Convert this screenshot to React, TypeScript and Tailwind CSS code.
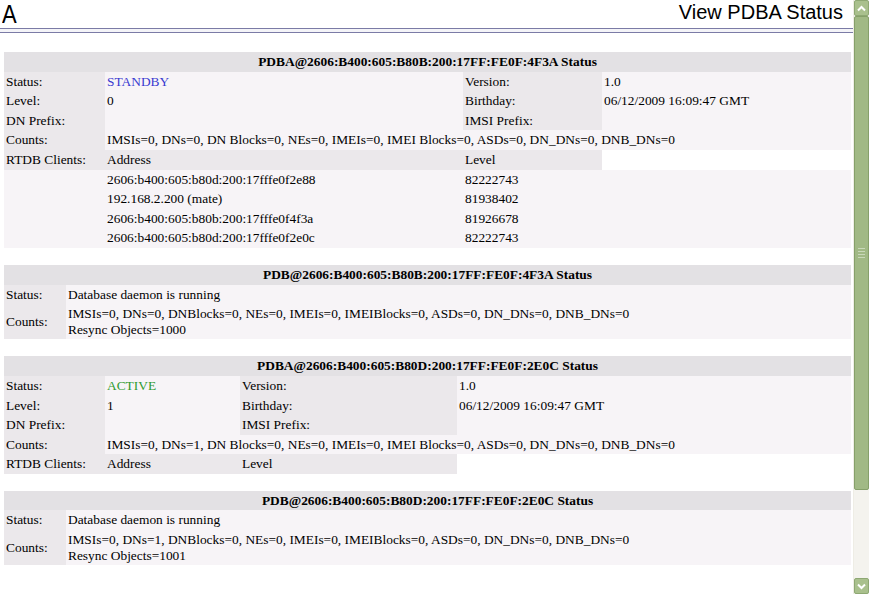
import React from "react";

const serif = { fontFamily: '"Liberation Serif", "Times New Roman", serif' };

const HDR = "bg-[#e3e1e4]";
const LBL = "bg-[#ebe8eb]";
const VAL = "bg-[#f7f4f7]";
const td = "px-[2px] py-[2px] leading-[15.6px] text-left align-middle whitespace-nowrap";

function Header({ title, cols }: { title: string; cols: number }) {
  return (
    <tr>
      <th colSpan={cols} className={`${HDR} ${td} text-center font-bold`} style={{ textAlign: "center" }}>
        {title}
      </th>
    </tr>
  );
}

function PdbaTable({
  title,
  status,
  statusColor,
  level,
  counts,
  widths,
  clients,
}: {
  title: string;
  status: string;
  statusColor: string;
  level: string;
  counts: string;
  widths: number[];
  clients: [string, string][];
}) {
  return (
    <table className="table-fixed w-[847px] border-collapse text-[13.4px] text-black" style={serif}>
      <colgroup>
        {widths.map((w, i) => (
          <col key={i} style={{ width: w }} />
        ))}
      </colgroup>
      <tbody>
        <Header title={title} cols={4} />
        <tr>
          <td className={`${LBL} ${td}`}>Status:</td>
          <td className={`${VAL} ${td} ${statusColor}`}>{status}</td>
          <td className={`${LBL} ${td}`}>Version:</td>
          <td className={`${VAL} ${td}`}>1.0</td>
        </tr>
        <tr>
          <td className={`${LBL} ${td}`}>Level:</td>
          <td className={`${VAL} ${td}`}>{level}</td>
          <td className={`${LBL} ${td}`}>Birthday:</td>
          <td className={`${VAL} ${td}`}>06/12/2009 16:09:47 GMT</td>
        </tr>
        <tr>
          <td className={`${LBL} ${td}`}>DN Prefix:</td>
          <td className={`${VAL} ${td}`}></td>
          <td className={`${LBL} ${td}`}>IMSI Prefix:</td>
          <td className={`${VAL} ${td}`}></td>
        </tr>
        <tr>
          <td className={`${LBL} ${td}`}>Counts:</td>
          <td colSpan={3} className={`${VAL} ${td}`}>
            {counts}
          </td>
        </tr>
        <tr>
          <td className={`${LBL} ${td}`}>RTDB Clients:</td>
          <td className={`${LBL} ${td}`}>Address</td>
          <td className={`${LBL} ${td}`}>Level</td>
          <td className={`${td}`}></td>
        </tr>
        {clients.map(([a, l], i) => (
          <tr key={i}>
            <td className={`${VAL} ${td}`}></td>
            <td className={`${VAL} ${td}`}>{a}</td>
            <td className={`${VAL} ${td}`}>{l}</td>
            <td className={`${VAL} ${td}`}></td>
          </tr>
        ))}
      </tbody>
    </table>
  );
}

function PdbTable({ title, counts, resync }: { title: string; counts: string; resync: string }) {
  return (
    <table className="table-fixed w-[847px] border-collapse text-[13.4px] text-black" style={serif}>
      <colgroup>
        <col style={{ width: 62 }} />
        <col style={{ width: 785 }} />
      </colgroup>
      <tbody>
        <Header title={title} cols={2} />
        <tr>
          <td className={`${LBL} ${td}`}>Status:</td>
          <td className={`${VAL} ${td}`}>Database daemon is running</td>
        </tr>
        <tr>
          <td className={`${LBL} ${td}`}>Counts:</td>
          <td className={`${VAL} ${td}`}>
            <div>{counts}</div>
            <div>{resync}</div>
          </td>
        </tr>
      </tbody>
    </table>
  );
}

function Scrollbar() {
  return (
    <div className="w-4 h-[594px] flex flex-col bg-[#f4f3ee] border-l border-[#eeede5]">
      <div className="h-[16px] w-full rounded-[2px] bg-[#a9c08d] border border-[#8ea873] flex items-center justify-center">
        <svg width="9" height="7" viewBox="0 0 9 7">
          <path d="M1 5.5 L4.5 2 L8 5.5" stroke="#fff" strokeWidth="2" fill="none" />
        </svg>
      </div>
      <div className="h-[474px] w-full rounded-[2px] bg-[#a1b985] border border-[#86a06a] flex items-center justify-center">
        <div className="flex flex-col gap-[2px]">
          <div className="w-[7px] h-px bg-[#c9d8b9]" />
          <div className="w-[7px] h-px bg-[#c9d8b9]" />
          <div className="w-[7px] h-px bg-[#c9d8b9]" />
          <div className="w-[7px] h-px bg-[#c9d8b9]" />
        </div>
      </div>
      <div className="flex-1" />
      <div className="h-[16px] w-full rounded-[2px] bg-[#a9c08d] border border-[#8ea873] flex items-center justify-center">
        <svg width="9" height="7" viewBox="0 0 9 7">
          <path d="M1 1.5 L4.5 5 L8 1.5" stroke="#fff" strokeWidth="2" fill="none" />
        </svg>
      </div>
    </div>
  );
}

export default function App() {
  const clients: [string, string][] = [
    ["2606:b400:605:b80d:200:17fffe0f2e88", "82222743"],
    ["192.168.2.200 (mate)", "81938402"],
    ["2606:b400:605:b80b:200:17fffe0f4f3a", "81926678"],
    ["2606:b400:605:b80d:200:17fffe0f2e0c", "82222743"],
  ];
  return (
    <div className="w-[869px] h-[594px] overflow-hidden flex bg-white">
      <div className="w-[853px] flex flex-col">
        <div className="h-[28px] flex items-start justify-between pl-[2px] pr-[10px]" style={{ fontFamily: '"Liberation Sans", Arial, sans-serif' }}>
          <span className="text-[25px] leading-[29px] inline-block scale-x-[0.88] origin-left">A</span>
          <span className="text-[20px] leading-[23px] mt-[1px]">View PDBA Status</span>
        </div>
        <div className="h-px bg-[#7b7ba6]" />
        <div className="h-[3px] bg-[#f4f4f8]" />
        <div className="h-px bg-[#7b7ba6]" />
        <div className="pl-[4px] pt-[19px] flex flex-col gap-[17px]">
          <PdbaTable
            title="PDBA@2606:B400:605:B80B:200:17FF:FE0F:4F3A Status"
            status="STANDBY"
            statusColor="text-[#3a3ad0]"
            level="0"
            counts="IMSIs=0, DNs=0, DN Blocks=0, NEs=0, IMEIs=0, IMEI Blocks=0, ASDs=0, DN_DNs=0, DNB_DNs=0"
            widths={[101, 358, 139, 249]}
            clients={clients}
          />
          <PdbTable
            title="PDB@2606:B400:605:B80B:200:17FF:FE0F:4F3A Status"
            counts="IMSIs=0, DNs=0, DNBlocks=0, NEs=0, IMEIs=0, IMEIBlocks=0, ASDs=0, DN_DNs=0, DNB_DNs=0"
            resync="Resync Objects=1000"
          />
          <PdbaTable
            title="PDBA@2606:B400:605:B80D:200:17FF:FE0F:2E0C Status"
            status="ACTIVE"
            statusColor="text-[#2f9a2f]"
            level="1"
            counts="IMSIs=0, DNs=1, DN Blocks=0, NEs=0, IMEIs=0, IMEI Blocks=0, ASDs=0, DN_DNs=0, DNB_DNs=0"
            widths={[101, 135, 217, 394]}
            clients={[]}
          />
          <PdbTable
            title="PDB@2606:B400:605:B80D:200:17FF:FE0F:2E0C Status"
            counts="IMSIs=0, DNs=1, DNBlocks=0, NEs=0, IMEIs=0, IMEIBlocks=0, ASDs=0, DN_DNs=0, DNB_DNs=0"
            resync="Resync Objects=1001"
          />
        </div>
      </div>
      <Scrollbar />
    </div>
  );
}
